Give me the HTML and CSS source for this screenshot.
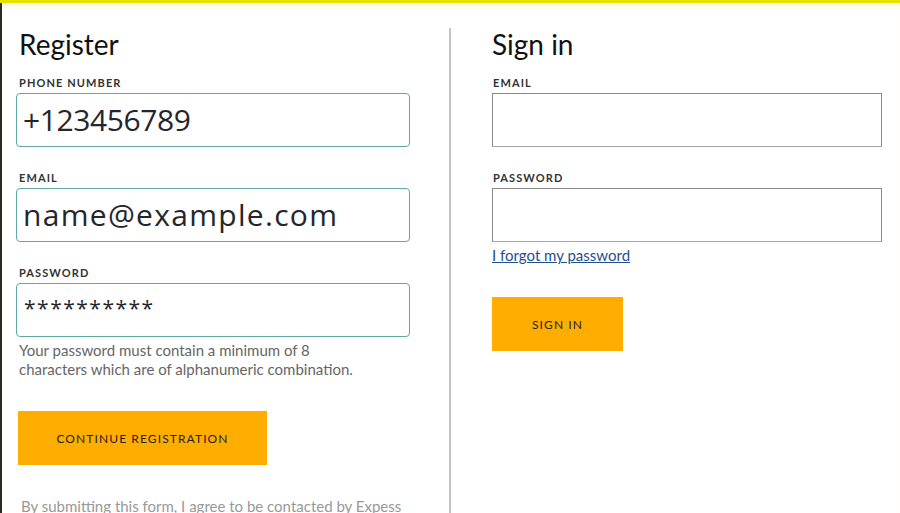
FILE: index.html
```html
<!DOCTYPE html>
<html lang="en">
<head>
    <meta charset="UTF-8">
    <title>Register / Sign in</title>
    <link rel="stylesheet" href="styles.css">
</head>
<body>
<div class="page">
    <div class="col col-register">
        <h1>Register</h1>

        <div class="field">
            <label>PHONE NUMBER</label>
            <div class="input filled big phone">+123456789</div>
        </div>

        <div class="field">
            <label>EMAIL</label>
            <div class="input filled big mail">name@example.com</div>
        </div>

        <div class="field">
            <label>PASSWORD</label>
            <div class="input filled stars">**********</div>
        </div>

        <p class="hint">Your password must contain a minimum of 8<br>characters which are of alphanumeric combination.</p>

        <button class="btn btn-wide">CONTINUE REGISTRATION</button>

        <p class="terms">By submitting this form, I agree to be contacted by Expess</p>
    </div>

    <div class="col col-signin">
        <h1>Sign in</h1>

        <div class="field">
            <label>EMAIL</label>
            <div class="input plain"></div>
        </div>

        <div class="field field-last">
            <label>PASSWORD</label>
            <div class="input plain"></div>
        </div>

        <a class="forgot" href="#">I forgot my password</a>

        <button class="btn btn-small">SIGN IN</button>
    </div>
</div>
</body>
</html>
```

FILE: styles.css
```css
*{
    padding: 0;
    margin: 0;
    box-sizing: border-box;
}

html, body{
    background: #fff;
    height: 100%;
    overflow: hidden;
}

body{
    border-top: 3px solid #e6e200;
    font-family: "Lato", "Open Sans", sans-serif;
    color: #222;
}

.page{
    display: flex;
    height: 100%;
    border-left: 2px solid #2a2a2a;
    box-shadow: inset 0 4px 5px -3px #f6f3a0;
    padding-top: 25px;
}

.col{
    display: flex;
    flex-direction: column;
    align-items: flex-start;
}

/* 内容超出高度时不要压缩 */
.col > *{
    flex-shrink: 0;
}

.col-register{
    width: 447px;
    padding-left: 14px;
}

.col-signin{
    flex: 1;
    border-left: 2px solid #c4c4c4;
    padding-left: 41px;
}

h1{
    font-size: 28px;
    font-weight: 400;
    line-height: 32px;
    margin-left: 3px;
    margin-bottom: 16px;
    color: #111;
}

.col-signin h1{
    margin-left: 0;
}

.field{
    display: flex;
    flex-direction: column;
    margin-bottom: 24px;
}

.field-last{
    margin-bottom: 4px;
}

label{
    font-size: 11px;
    line-height: 14px;
    letter-spacing: 1.1px;
    font-weight: 700;
    color: #333;
    margin-left: 3px;
    margin-bottom: 3px;
}

.col-signin label{
    margin-left: 1px;
}

.input{
    height: 54px;
    display: flex;
    align-items: center;
}

/* 注册表单: 青色圆角边框 */
.filled{
    width: 394px;
    border: 1px solid #5fa9a2;
    border-radius: 4px;
    padding-left: 6px;
    font-family: "Open Sans", sans-serif;
    color: #24262b;
}

.big{
    font-size: 30px;
    font-weight: 500;
    padding-bottom: 1px;
}

.phone{
    letter-spacing: -0.4px;
}

.mail{
    letter-spacing: 1.3px;
}

.stars{
    font-size: 21px;
    letter-spacing: 1.5px;
    align-items: flex-start;
    padding-top: 10px;
    padding-left: 7px;
}

.plain{
    width: 390px;
    border: 1px solid #8a8a8a;
    border-bottom-color: #a6a6a6;
}

.hint{
    font-size: 15px;
    line-height: 19px;
    color: #666;
    margin: -20px 0 0 3px;
}

.btn{
    border: none;
    background: #ffad00;
    font-family: "Lato", sans-serif;
    font-size: 12px;
    letter-spacing: 1.1px;
    color: #222;
}

.btn-wide{
    width: 249px;
    height: 54px;
    margin: 32px 0 0 2px;
}

.btn-small{
    width: 131px;
    height: 54px;
    margin-top: 32px;
}

.terms{
    font-size: 15px;
    line-height: 19px;
    color: #999;
    margin: 32px 0 0 5px;
    white-space: nowrap;
}

.forgot{
    font-size: 15px;
    line-height: 19px;
    color: #1f4f8f;
    text-decoration: underline;
}
```
